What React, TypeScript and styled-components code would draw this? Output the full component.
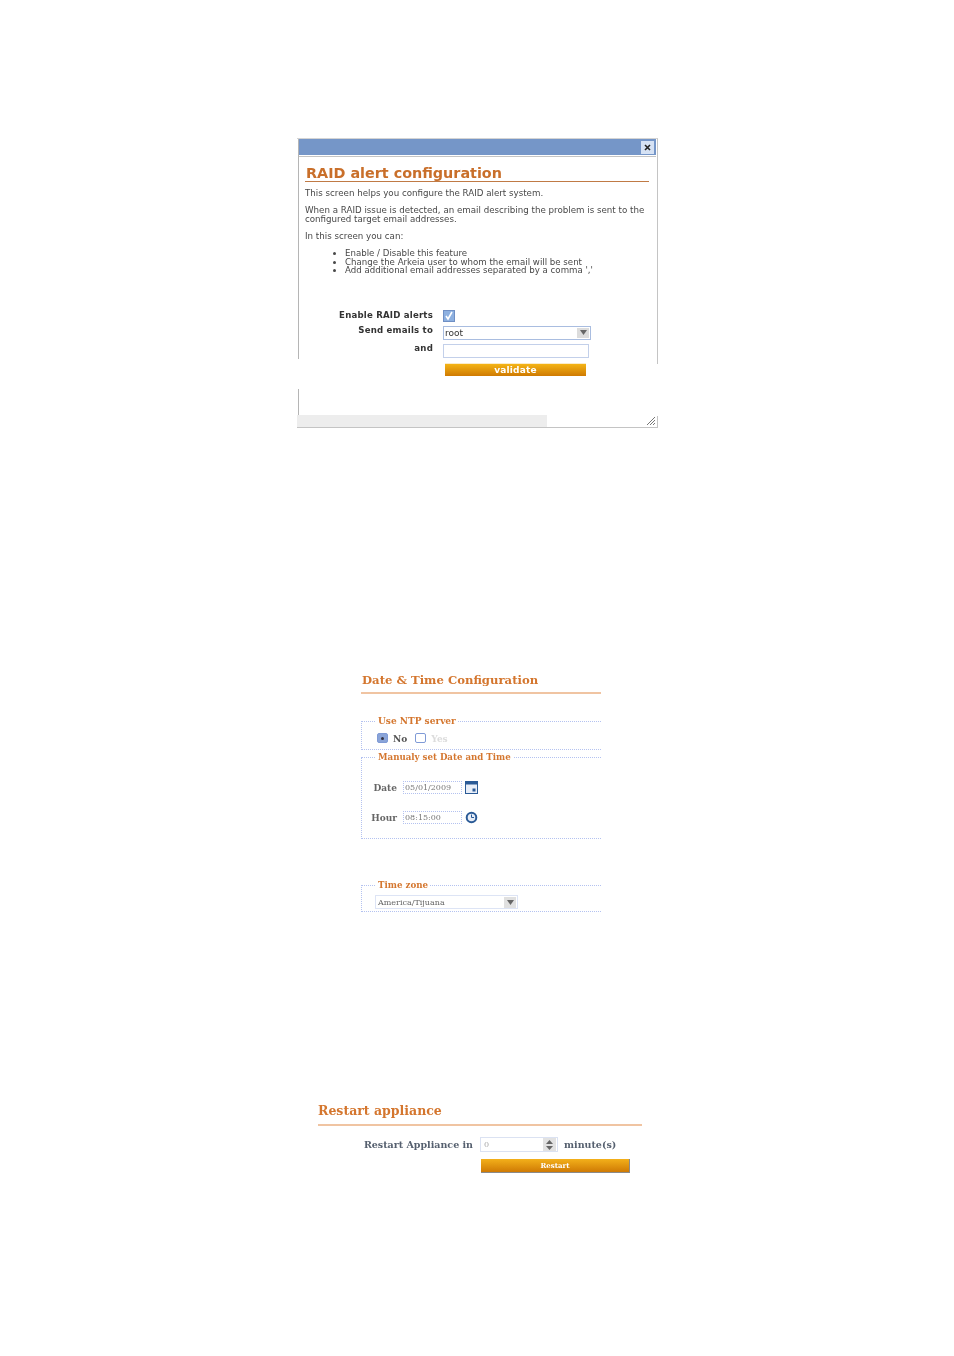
import React from "react";
import styled, { createGlobalStyle } from "styled-components";

const GlobalStyle = createGlobalStyle`
  html, body {
    margin: 0;
    padding: 0;
    background: #ffffff;
  }
  #root {
    width: 954px;
    height: 1356px;
    overflow: hidden;
  }
`;

const Page = styled.div`
  display: flex;
  flex-direction: column;
  padding-top: 138px;
`;

/* ---------- RAID dialog ---------- */

const Panel = styled.div`
  position: relative;
  box-sizing: border-box;
  width: 361px;
  height: 290px;
  margin-left: 297px;
  padding: 0 1px 0 2px;
  border-top: 1px solid #d4d4d4;
  border-bottom: 1px solid #c4c4c4;
  border-right: 1px solid #c4c4c4;
  font-family: "DejaVu Sans", sans-serif;
  filter: blur(0.4px);
  color: #333;
`;

const LeftEdge = styled.div`
  position: absolute;
  left: 1px;
  top: 0;
  bottom: 12px;
  width: 1px;
  background: #b5b5b5;
`;

const EdgeGap = styled.div`
  position: absolute;
  left: 0;
  top: 220px;
  width: 4px;
  height: 30px;
  background: #fff;
`;

const RightGap = styled.div`
  position: absolute;
  right: -1px;
  top: 225px;
  width: 1px;
  height: 52px;
  background: #fff;
`;

const TitleBar = styled.div`
  display: flex;
  justify-content: flex-end;
  align-items: center;
  height: 16px;
  padding-right: 2px;
  background: #7596c8;
  border-bottom: 1px solid #fff;
  box-shadow: 0 1px 0 #c4c4c4;
`;

const CloseButton = styled.div`
  display: flex;
  align-items: center;
  justify-content: center;
  width: 13px;
  height: 13px;
  background: #d6e2f4;
  color: #2a2a3a;
`;

const PanelBody = styled.div`
  padding: 9px 7px 0 6px;
`;

const PanelHeading = styled.h1`
  margin: 0 0 0 1px;
  font-size: 14.35px;
  line-height: 16px;
  font-weight: 700;
  color: #c96f2a;
  white-space: nowrap;
`;

const HeadingRule = styled.div`
  height: 1px;
  background: #c07a45;
  margin: 0 0 7px 0;
`;

const Para = styled.p`
  margin: 0 0 8.5px 0;
  font-size: 8.7px;
  line-height: 8.5px;
  color: #484848;
`;

const Bullets = styled.ul`
  margin: 9px 0 0 0;
  padding: 0 0 0 40px;
  font-size: 8.65px;
  line-height: 8.6px;
  color: #484848;
`;

const FormGrid = styled.div`
  display: grid;
  grid-template-columns: 128px 1fr;
  grid-template-rows: 15px 20px 16px 22px;
  column-gap: 10px;
  margin-top: 33px;
  align-items: center;
`;

const FormLabel = styled.label<{ $lift?: boolean }>`
  justify-self: end;
  padding-bottom: ${(p) => (p.$lift ? "5px" : "0")};
  font-size: 8.6px;
  font-weight: 700;
  letter-spacing: 0.2px;
  color: #333;
  white-space: nowrap;
`;

const CheckBox = styled.div`
  display: flex;
  align-items: center;
  justify-content: center;
  width: 12px;
  height: 12px;
  margin-top: 2px;
  background: #8db0e0;
  border: 1px solid #6f8fc4;
  box-sizing: border-box;
`;

const SelectBox = styled.div`
  box-sizing: border-box;
  display: flex;
  align-items: center;
  justify-content: space-between;
  width: 148px;
  height: 14px;
  padding: 0 1px 0 1px;
  border: 1px solid #a9bde0;
  font-size: 9px;
  color: #333;
`;

const SelectArrow = styled.div`
  display: flex;
  align-items: center;
  justify-content: center;
  width: 12px;
  height: 10px;
  background: #dcdcdc;
`;

const TextBox = styled.div`
  box-sizing: border-box;
  width: 146px;
  height: 14px;
  border: 1px solid #c3d0ea;
`;

const ValidateButton = styled.div`
  width: 141px;
  height: 12px;
  margin-left: 2px;
  background: linear-gradient(#f4b416, #cf7a02);
  box-shadow: 0 -1px 0 #fbeccb;
  color: #fff;
  font-size: 9px;
  font-weight: 700;
  line-height: 12px;
  text-align: center;
  letter-spacing: 0.2px;
`;

const BottomStrip = styled.div`
  position: absolute;
  left: 0;
  bottom: 0;
  width: 250px;
  height: 12px;
  background: #ededed;
`;

const Grip = styled.svg`
  position: absolute;
  right: 1px;
  bottom: 1px;
`;

/* ---------- scanned serif pages ---------- */

const ScanSection = styled.section<{ $left: number; $top: number; $width: number }>`
  width: ${(p) => p.$width}px;
  margin-left: ${(p) => p.$left}px;
  margin-top: ${(p) => p.$top}px;
  font-family: "DejaVu Serif", serif;
  filter: blur(0.7px);
`;

const ScanTitle = styled.h2<{ $size: number; $indent: number }>`
  margin: 0 0 0 ${(p) => p.$indent}px;
  font-size: ${(p) => p.$size}px;
  line-height: 16px;
  font-weight: 700;
  color: #d4762e;
  white-space: nowrap;
`;

const ScanRule = styled.div<{ $gap: number }>`
  height: 2px;
  margin-top: ${(p) => p.$gap}px;
  background: #f0c4a2;
`;

const DashedSet = styled.fieldset<{ $height: number; $top: number }>`
  box-sizing: border-box;
  height: ${(p) => p.$height}px;
  margin: ${(p) => p.$top}px 0 0 0;
  padding: 0;
  border: 1px dotted #b4c2f0;
  border-right: none;
  min-width: 0;
`;

const DashedLegend = styled.legend<{ $size: number }>`
  margin-left: 14px;
  padding: 0 2px;
  font-size: ${(p) => p.$size}px;
  line-height: 10px;
  font-weight: 700;
  color: #d4762e;
  white-space: nowrap;
`;

const RadioRow = styled.div`
  display: flex;
  align-items: center;
  padding: 8px 0 0 15px;
  font-size: 9px;
  font-weight: 700;
  color: #555;
`;

const Radio = styled.span<{ $on?: boolean }>`
  box-sizing: border-box;
  display: inline-flex;
  align-items: center;
  justify-content: center;
  width: 11px;
  height: 10px;
  margin: -2px 5px 0 0;
  border-radius: 2px;
  border: 1px solid #7f9ad6;
  background: ${(p) => (p.$on ? "#8aa4d8" : "#fff")};
`;

const RadioDot = styled.span`
  width: 3px;
  height: 3px;
  border-radius: 50%;
  background: #334;
`;

const RadioText = styled.span<{ $muted?: boolean }>`
  margin-right: 8px;
  color: ${(p) => (p.$muted ? "#dcdcdc" : "#555")};
`;

const DateGrid = styled.div`
  display: grid;
  grid-template-columns: 35px auto;
  row-gap: 17px;
  padding-top: 19px;
  justify-content: start;
  align-items: center;
`;

const DateLabel = styled.span`
  justify-self: end;
  font-size: 9px;
  font-weight: 700;
  color: #666;
`;

const DateField = styled.div`
  display: flex;
  align-items: center;
  gap: 3px;
  margin-left: 6px;
`;

const DottedInput = styled.div<{ $width: number }>`
  box-sizing: border-box;
  width: ${(p) => p.$width}px;
  height: 13px;
  padding-left: 1px;
  border: 1px dotted #b4c2f0;
  font-size: 8px;
  line-height: 11px;
  color: #777;
`;

const ZoneRow = styled.div`
  display: flex;
  margin: 0 0 0 13px;
  padding-top: 5px;
`;

const ZoneSelect = styled.div`
  box-sizing: border-box;
  display: flex;
  align-items: center;
  justify-content: space-between;
  width: 143px;
  height: 14px;
  padding: 0 1px 0 2px;
  border: 1px solid #dde4f5;
  font-size: 8px;
  color: #666;
`;

const ZoneArrow = styled.div`
  display: flex;
  align-items: center;
  justify-content: center;
  width: 12px;
  height: 11px;
  background: #e0e0e0;
`;

const RestartGrid = styled.div`
  display: grid;
  grid-template-columns: 155px 71px auto;
  grid-template-rows: 16px 14px;
  column-gap: 7px;
  row-gap: 7px;
  margin-top: 10px;
  align-items: center;
`;

const RestartLabel = styled.span`
  justify-self: end;
  font-size: 9.5px;
  font-weight: 700;
  color: #56606f;
  white-space: nowrap;
`;

const SpinInput = styled.div`
  box-sizing: border-box;
  display: flex;
  align-items: center;
  justify-content: space-between;
  width: 78px;
  height: 15px;
  margin-top: 1px;
  padding: 0 1px 0 3px;
  border: 1px solid #dbe2f2;
  font-size: 8px;
  color: #aaa;
`;

const SpinArrows = styled.div`
  display: flex;
  align-items: center;
  justify-content: center;
  width: 13px;
  height: 13px;
  background: #e2e2e2;
`;

const RestartUnit = styled.span`
  margin: 1px 0 0 6px;
  font-size: 9.5px;
  font-weight: 700;
  color: #56606f;
`;

const RestartButton = styled.div`
  grid-column: 2 / 4;
  justify-self: start;
  width: 148px;
  height: 13px;
  margin-left: 1px;
  background: linear-gradient(#f3b01a, #cf7a04);
  border-right: 1px solid #8a8a8a;
  border-bottom: 1px solid #8a8a8a;
  color: #fff;
  font-size: 7px;
  font-weight: 700;
  line-height: 13px;
  text-align: center;
`;

const Caret = ({ color = "#666" }: { color?: string }) => (
  <svg width="7" height="5" viewBox="0 0 7 5">
    <path d="M0 0h7L3.5 5z" fill={color} />
  </svg>
);

export default function App() {
  return (
    <>
      <GlobalStyle />
      <Page>
        <Panel>
          <LeftEdge />
          <EdgeGap />
          <RightGap />
          <BottomStrip />
          <TitleBar>
            <CloseButton>
              <svg width="7" height="7" viewBox="0 0 7 7">
                <path d="M1 1l5 5M6 1L1 6" stroke="#222" strokeWidth="1.6" />
              </svg>
            </CloseButton>
          </TitleBar>
          <PanelBody>
            <PanelHeading>RAID alert configuration</PanelHeading>
            <HeadingRule />
            <Para>This screen helps you configure the RAID alert system.</Para>
            <Para>
              When a RAID issue is detected, an email describing the problem is sent to the
              configured target email addresses.
            </Para>
            <Para>In this screen you can:</Para>
            <Bullets>
              <li>Enable / Disable this feature</li>
              <li>Change the Arkeia user to whom the email will be sent</li>
              <li>Add additional email addresses separated by a comma ','</li>
            </Bullets>
            <FormGrid>
              <FormLabel>Enable RAID alerts</FormLabel>
              <CheckBox>
                <svg width="10" height="10" viewBox="0 0 10 10">
                  <path d="M2 5l2 3 4-7" stroke="#fff" strokeWidth="1.6" fill="none" />
                </svg>
              </CheckBox>
              <FormLabel $lift>Send emails to</FormLabel>
              <SelectBox>
                root
                <SelectArrow>
                  <Caret />
                </SelectArrow>
              </SelectBox>
              <FormLabel $lift>and</FormLabel>
              <TextBox />
              <span />
              <ValidateButton>validate</ValidateButton>
            </FormGrid>
          </PanelBody>
          <Grip width="10" height="10" viewBox="0 0 10 10">
            <path d="M1 9l8-8M4 9l5-5M7 9l2-2" stroke="#777" strokeWidth="1" />
          </Grip>
        </Panel>

        <ScanSection $left={361} $top={244} $width={240}>
          <ScanTitle $size={11.65} $indent={1}>
            Date &amp; Time Configuration
          </ScanTitle>
          <ScanRule $gap={4} />
          <DashedSet $height={34} $top={22}>
            <DashedLegend $size={9}>Use NTP server</DashedLegend>
            <RadioRow>
              <Radio $on>
                <RadioDot />
              </Radio>
              <RadioText>No</RadioText>
              <Radio />
              <RadioText $muted>Yes</RadioText>
            </RadioRow>
          </DashedSet>
          <DashedSet $height={87} $top={2}>
            <DashedLegend $size={8.65}>Manualy set Date and Time</DashedLegend>
            <DateGrid>
              <DateLabel>Date</DateLabel>
              <DateField>
                <DottedInput $width={59}>05/01/2009</DottedInput>
                <svg width="13" height="13" viewBox="0 0 13 13">
                  <rect x="0.5" y="0.5" width="12" height="12" fill="#e8eef8" stroke="#2a5a96" />
                  <rect x="0" y="0" width="13" height="3.5" fill="#2a5a96" />
                  <rect x="7.5" y="7.5" width="3" height="3" fill="#2a5a96" />
                </svg>
              </DateField>
              <DateLabel>Hour</DateLabel>
              <DateField>
                <DottedInput $width={59}>08:15:00</DottedInput>
                <svg width="13" height="13" viewBox="0 0 13 13">
                  <circle cx="6.5" cy="6.5" r="4.8" fill="#e8eef8" stroke="#2a5a96" strokeWidth="2" />
                  <path d="M6.5 3.5v3h2.5" stroke="#2a5a96" strokeWidth="1" fill="none" />
                </svg>
              </DateField>
            </DateGrid>
          </DashedSet>
          <DashedSet $height={32} $top={41}>
            <DashedLegend $size={8.7}>Time zone</DashedLegend>
            <ZoneRow>
              <ZoneSelect>
                America/Tijuana
                <ZoneArrow>
                  <Caret />
                </ZoneArrow>
              </ZoneSelect>
            </ZoneRow>
          </DashedSet>
        </ScanSection>

        <ScanSection $left={318} $top={191} $width={324}>
          <ScanTitle $size={12.5} $indent={0}>
            Restart appliance
          </ScanTitle>
          <ScanRule $gap={5} />
          <RestartGrid>
            <RestartLabel>Restart Appliance in</RestartLabel>
            <SpinInput>
              0
              <SpinArrows>
                <svg width="7" height="10" viewBox="0 0 7 10">
                  <path d="M0 4h7L3.5 0zM0 6h7L3.5 10z" fill="#666" />
                </svg>
              </SpinArrows>
            </SpinInput>
            <RestartUnit>minute(s)</RestartUnit>
            <RestartButton>Restart</RestartButton>
          </RestartGrid>
        </ScanSection>
      </Page>
    </>
  );
}
